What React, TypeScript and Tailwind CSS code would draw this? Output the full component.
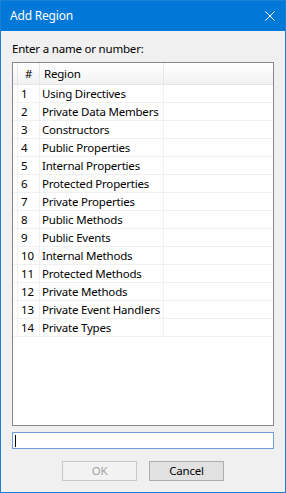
const regions = [
    "Using Directives",
    "Private Data Members",
    "Constructors",
    "Public Properties",
    "Internal Properties",
    "Protected Properties",
    "Private Properties",
    "Public Methods",
    "Public Events",
    "Internal Methods",
    "Protected Methods",
    "Private Methods",
    "Private Event Handlers",
    "Private Types",
]

const CloseIcon = () => (
    <svg width="10" height="10" viewBox="0 0 10 10" fill="none">
        <path d="M0.5 0.5 L9.5 9.5 M9.5 0.5 L0.5 9.5" stroke="white" strokeWidth="1" />
    </svg>
)

const App = () => {
    return (
        <div className="flex h-[493px] w-[286px] flex-col border border-[#1a7fd5] bg-[#f0f0f0] font-['Segoe_UI','Noto_Sans',sans-serif] text-[11.5px] tracking-[-0.2px] text-black">
            <div className="flex h-[30px] shrink-0 items-center justify-between bg-[#0078d7] pl-[9px] pr-[10px] text-[12px] text-white">
                <span className="leading-none">Add Region</span>
                <CloseIcon />
            </div>

            <div className="flex flex-1 flex-col px-[11px] pt-[10px]">
                <p className="h-[16px] leading-[16px]">Enter a name or number:</p>

                <div className="mt-[5px] flex h-[364px] flex-col border border-[#828790] bg-white">
                    <div className="flex h-[22px] shrink-0 border-b border-[#e5e5e5] bg-linear-to-b from-white to-[#f1f2f4] leading-[22px]">
                        <div className="w-[5px] border-r border-[#e5e5e5]" />
                        <div className="w-[22px] border-r border-[#e5e5e5] pl-[7px]">#</div>
                        <div className="w-[124px] border-r border-[#e5e5e5] pl-[4px]">Region</div>
                        <div className="flex-1" />
                    </div>
                    {regions.map((name, i) => (
                        <div key={name} className="flex h-[18px] shrink-0 border-b border-[#f0f0f0] leading-[18px]">
                            <div className="w-[5px] border-r border-[#f0f0f0]" />
                            <div className="w-[22px] border-r border-[#f0f0f0] pl-[3px]">{i + 1}</div>
                            <div className="w-[124px] whitespace-nowrap border-r border-[#f0f0f0] pl-[2px]">{name}</div>
                            <div className="flex-1" />
                        </div>
                    ))}
                </div>

                <div className="mt-[6px] flex h-[17px] items-center border border-[#6e9fd6] bg-white pl-[2px]">
                    <div className="h-[12px] w-px bg-black" />
                </div>

                <div className="mt-[12px] flex justify-center gap-[12px]">
                    <button
                        type="button"
                        disabled
                        className="h-[20px] w-[75px] border border-[#c8c8c8] bg-[#f2f2f2] leading-none text-[#a3a3a3]"
                    >
                        OK
                    </button>
                    <button
                        type="button"
                        className="h-[20px] w-[75px] border border-[#adadad] bg-[#e1e1e1] leading-none"
                    >
                        Cancel
                    </button>
                </div>
            </div>
        </div>
    )
}

export default App
